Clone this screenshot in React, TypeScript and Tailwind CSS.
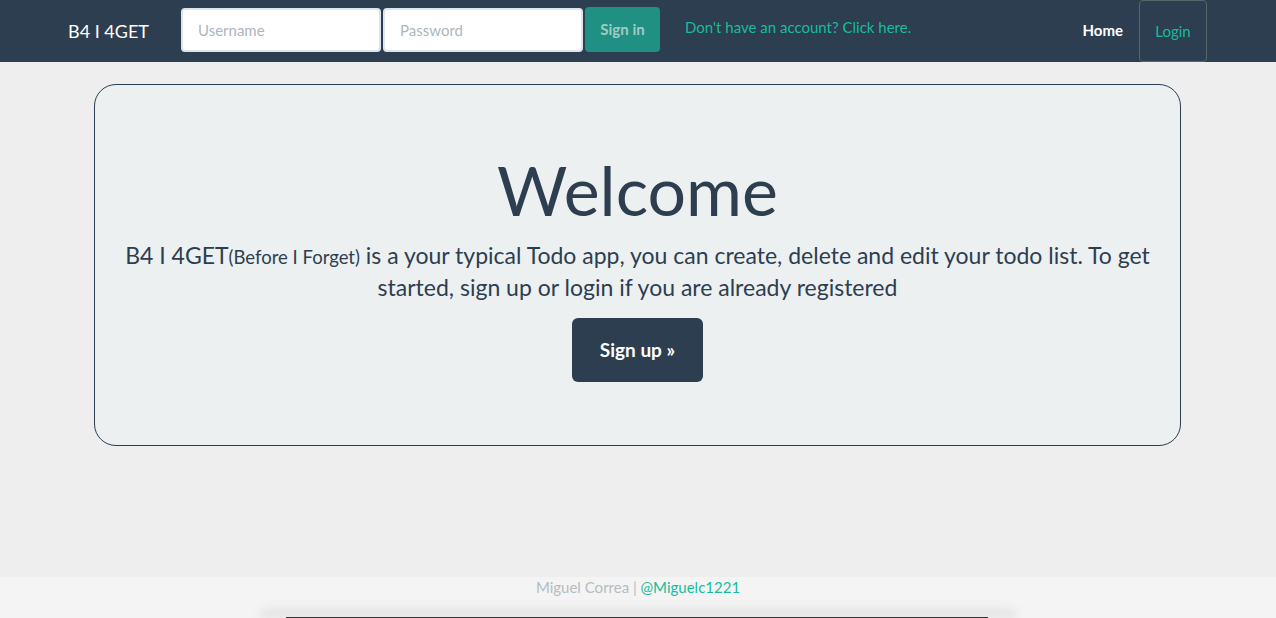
import React from "react";

export default function App() {
  return (
    <div
      className="w-[1276px] h-[618px] bg-[#eeeeee] flex flex-col overflow-hidden"
      style={{ fontFamily: "Lato, 'Open Sans', sans-serif" }}
    >
      <nav className="h-[62px] bg-[#2c3e50] flex items-center shrink-0">
        <div className="pl-[68px] text-white text-[18px] leading-none w-[181px] pb-[1px]">B4 I 4GET</div>
        <div className="flex items-center gap-[2px] self-start mt-[7px]">
          <input
            placeholder="Username"
            className="w-[200px] h-[44px] bg-white rounded-[4px] border-2 border-[#dce4ec] px-[15px] text-[15px] placeholder:text-[#acb6c0] outline-none"
          />
          <input
            type="password"
            placeholder="Password"
            className="w-[200px] h-[44px] bg-white rounded-[4px] border-2 border-[#dce4ec] px-[15px] text-[15px] placeholder:text-[#acb6c0] outline-none"
          />
          <button className="w-[75px] h-[45px] bg-[#1f9081] rounded-[4px] text-[15px] text-[#a3cbc5] font-bold">
            Sign in
          </button>
        </div>
        <a className="ml-[25px] text-[15px] text-[#18bc9c] pb-[7px]">Don't have an account? Click here.</a>
        <div className="ml-auto flex items-center h-full">
          <a className="text-white text-[15px] font-bold pb-[2px]">Home</a>
          <div className="ml-[16px] w-[68px] h-[62px] border border-[#56666a] rounded-[4px] flex items-center justify-center text-[#18bc9c] text-[15px] pt-[1px] mr-[69px]">
            Login
          </div>
        </div>
      </nav>

      <main className="flex-1">
        <div className="mt-[22px] ml-[94px] w-[1087px] h-[362px] bg-[#ecf0f1] border border-[#2c3e50] rounded-[22px] flex flex-col items-center pt-[71px] text-[#2c3e50]">
          <h1 className="text-[68px] leading-[68px]">Welcome</h1>
          <p className="text-[23px] leading-[32px] text-center px-[28px] mt-[15px]">
            B4 I 4GET<span className="text-[18.5px] leading-none">(Before I Forget)</span> is a your typical Todo app, you can create, delete and edit your todo list. To get started, sign up or login if you are already registered
          </p>
          <button className="mt-[15px] w-[131px] h-[64px] bg-[#2c3e50] rounded-[6px] text-white text-[19px] font-bold">
            Sign up »
          </button>
        </div>
      </main>

      <footer className="h-[41px] bg-[#f4f4f4] shrink-0 relative">
        <p className="text-center text-[15px] leading-none pt-[3px]">
          <span className="text-[#b4bcc2]">Miguel Correa | </span>
          <a className="text-[#18bc9c]">@Miguelc1221</a>
        </p>
        <div className="absolute left-[260px] right-[260px] bottom-0 h-[14px] bg-gradient-to-b from-transparent to-[#dddddd] rounded-t-[40px] blur-[4px]" />
        <div className="absolute left-[286px] w-[702px] bottom-0 h-[1px] bg-[#333]" />
      </footer>
    </div>
  );
}
